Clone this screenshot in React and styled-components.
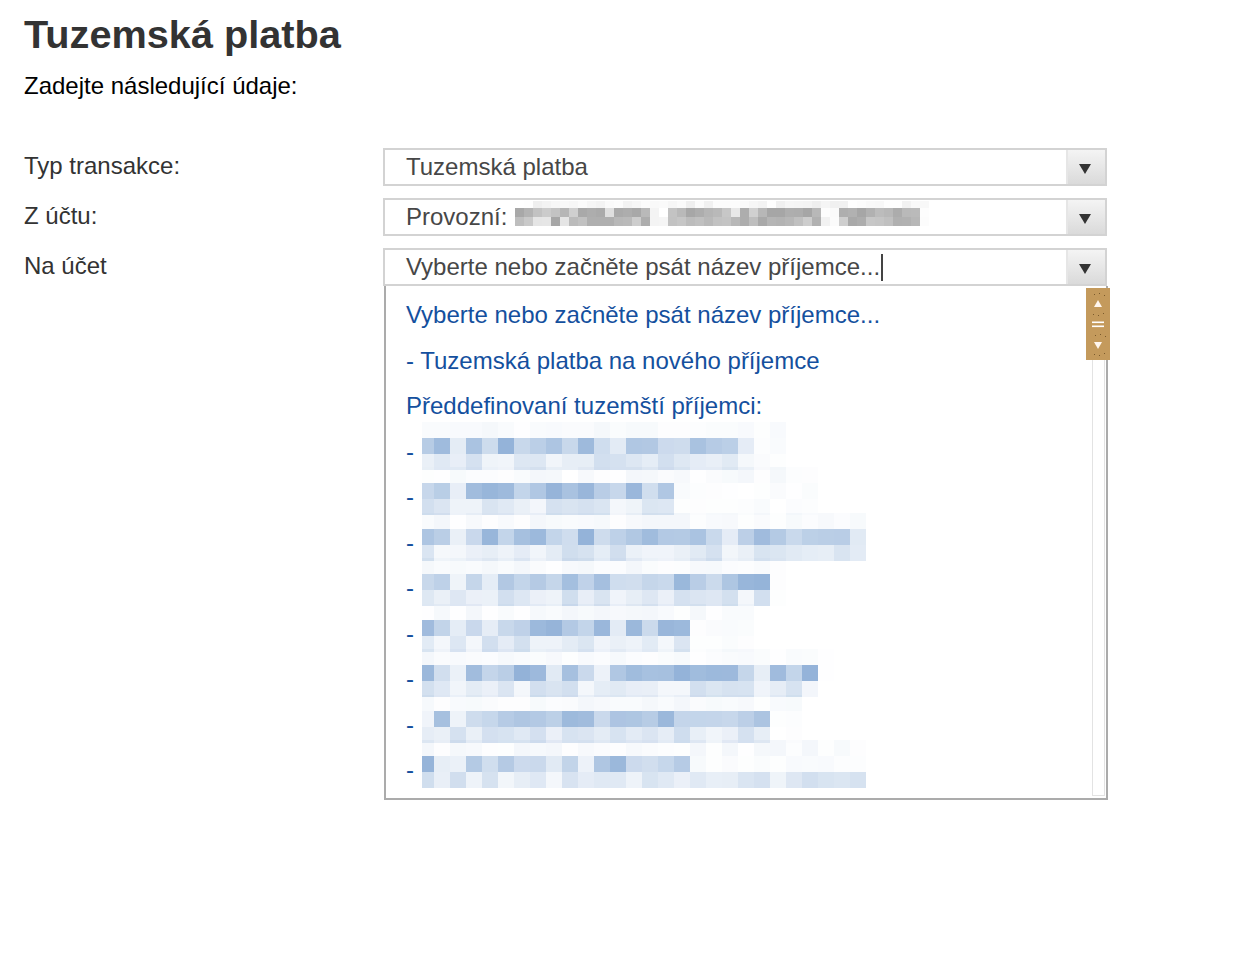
import React from 'react';
import styled, { createGlobalStyle } from 'styled-components';

const GlobalStyle = createGlobalStyle`
  html, body { margin: 0; padding: 0; background: #fff; }
  body { font-family: "Liberation Sans", Arial, Helvetica, sans-serif; }
`;

const Page = styled.div`
  box-sizing: border-box;
  width: 1238px;
  min-height: 956px;
  padding: 10px 0 0 24px;
`;

const Title = styled.h1`
  margin: 0;
  font-size: 39.7px;
  line-height: 48px;
  font-weight: 700;
  color: #333;
`;

const Subtitle = styled.p`
  margin: 14px 0 0;
  font-size: 24px;
  line-height: 28px;
  color: #000;
`;

const Form = styled.div`
  margin-top: 48px;
  display: flex;
  flex-direction: column;
  gap: 12px;
`;

const Row = styled.div`
  display: flex;
  align-items: flex-start;
`;

const Label = styled.div`
  width: 359px;
  font-size: 24px;
  line-height: 36px;
  color: #333;
`;

const SelectWrap = styled.div`
  position: relative;
  width: 724px;
`;

const SelectBox = styled.div`
  box-sizing: border-box;
  display: flex;
  height: 38px;
  border: 2px solid #d3d3d3;
  background: #fff;
`;

const SelectValue = styled.div`
  flex: 1;
  display: flex;
  align-items: center;
  padding-left: 21px;
  font-size: 24px;
  line-height: 34px;
  color: #474747;
  white-space: nowrap;
  overflow: hidden;
`;

const ArrowButton = styled.div`
  width: 39px;
  border-left: 2px solid #e6e6e6;
  background: linear-gradient(#f4f4f4, #dadada);
  display: flex;
  align-items: center;
  justify-content: center;
  padding: 4px 3px 0 0;
  box-sizing: border-box;
`;

const Caret = styled.span`
  display: inline-block;
  width: 2px;
  height: 27px;
  margin-left: 1px;
  background: #444;
`;

const GrayBlur = styled.span`
  display: flex;
  flex-direction: column;
  margin-top: -7px;
  margin-left: 1px;
`;

const BlurRow = styled.span`
  display: flex;
`;

const Block = styled.span`
  display: block;
  width: ${(p) => p.$w}px;
  height: ${(p) => p.$h}px;
`;

const DropList = styled.div`
  position: absolute;
  top: 100%;
  left: 1px;
  right: -1px;
  height: 514px;
  box-sizing: border-box;
  border: 2px solid #ababab;
  border-top: none;
  background: #fff;
`;

const Viewport = styled.div`
  height: 100%;
  overflow: hidden;
  box-sizing: border-box;
  padding: 6px 0 0 20px;
`;

const Option = styled.div`
  display: flex;
  align-items: flex-start;
  height: 45.5px;
  font-size: 24px;
  line-height: 45.5px;
  color: #14509e;
  white-space: nowrap;
`;

const Dash = styled.span`
  width: 16px;
  flex: none;
`;

const ItemBlur = styled.span`
  display: flex;
  flex-direction: column;
  margin-top: -7px;
`;

const ScrollTrack = styled.div`
  position: absolute;
  top: 2px;
  bottom: 2px;
  right: 1px;
  width: 13px;
  box-sizing: border-box;
  border: 1.5px solid #e3e3e3;
  border-top: none;
`;

const ScrollThumb = styled.div`
  position: absolute;
  top: 2px;
  right: -4px;
  width: 24px;
  height: 72px;
  background: #c49a5c;
  display: flex;
`;

const rng = (seed) => {
  let s = seed >>> 0;
  return () => {
    s = (s + 0x6d2b79f5) >>> 0;
    let t = s;
    t = Math.imul(t ^ (t >>> 15), t | 1);
    t ^= t + Math.imul(t ^ (t >>> 7), t | 61);
    return ((t ^ (t >>> 14)) >>> 0) / 4294967296;
  };
};

const recipients = [
  { seed: 11, dark: 740, light: 740, faint: 772 },
  { seed: 23, dark: 659, light: 659, faint: 805 },
  { seed: 37, dark: 852, light: 852, faint: 852 },
  { seed: 41, dark: 756, light: 756, faint: 772 },
  { seed: 53, dark: 676, light: 676, faint: 752 },
  { seed: 67, dark: 804, light: 804, faint: 820 },
  { seed: 71, dark: 756, light: 756, faint: 800 },
  { seed: 89, dark: 676, light: 866, faint: 866 },
];

function buildItemRows(spec) {
  const r = rng(spec.seed);
  const maxEnd = Math.max(spec.dark, spec.light, spec.faint);
  const widths = [12];
  let x = 434;
  while (x < maxEnd) {
    widths.push(16);
    x += 16;
  }
  return ['faint', 'dark', 'light'].map((kind) => {
    let pos = 422;
    return widths.map((w, i) => {
      const start = pos;
      pos += w;
      let a = 0;
      if (kind === 'dark') {
        if (start < spec.dark) a = i === 2 || r() < 0.1 ? 0.08 + r() * 0.08 : 0.24 + r() * 0.32;
        else if (start < spec.faint) a = r() * 0.04;
      } else if (kind === 'light') {
        if (start < spec.light) a = 0.05 + r() * 0.2;
        else if (start < spec.faint) a = r() * 0.03;
      } else {
        if (start < spec.faint) a = r() * 0.06;
      }
      return { w, color: `rgba(62,118,186,${a.toFixed(3)})` };
    });
  });
}

function buildGrayRows() {
  const r = rng(7);
  const n = 46;
  const gaps = [15, 16, 34, 35];
  return [7, 9, 9].map((h, ri) => ({
    h,
    cells: Array.from({ length: n }, (_, i) => {
      let a;
      if (ri === 0) a = r() * 0.1;
      else if (gaps.includes(i)) a = r() * 0.08;
      else if (i >= 45) a = r() * 0.06;
      else a = r() < 0.12 ? 0.14 + r() * 0.1 : 0.28 + r() * 0.26;
      return `rgba(90,90,90,${a.toFixed(3)})`;
    }),
  }));
}

const ArrowIcon = () => (
  <svg width="12" height="10" viewBox="0 0 12 10">
    <polygon points="0,0 12,0 6,10" fill="#333" />
  </svg>
);

const ThumbArt = () => {
  const dots = [
    [8, 6], [13, 5], [18, 7], [7, 26], [12, 27], [17, 25],
    [9, 47], [14, 46], [19, 48], [8, 66], [13, 67], [18, 65],
  ];
  return (
    <svg width="24" height="72" viewBox="0 0 24 72">
      {dots.map(([x, y], i) => (
        <rect key={i} x={x} y={y} width="1" height="1" fill="#7a5a2c" />
      ))}
      <polygon points="12,12 16,19 8,19" fill="#fff6ee" />
      <rect x="6" y="33.5" width="12" height="1.6" fill="#fff" />
      <rect x="6" y="37.5" width="12" height="1.6" fill="#fff" />
      <polygon points="8,54 16,54 12,61" fill="#fff6ee" />
    </svg>
  );
};

const Select = ({ children, open }) => (
  <SelectWrap>
    <SelectBox>
      <SelectValue>{children}</SelectValue>
      <ArrowButton>
        <ArrowIcon />
      </ArrowButton>
    </SelectBox>
    {open}
  </SelectWrap>
);

export default function App() {
  const grayRows = buildGrayRows();
  return (
    <Page>
      <GlobalStyle />
      <Title>Tuzemská platba</Title>
      <Subtitle>Zadejte následující údaje:</Subtitle>
      <Form>
        <Row>
          <Label>Typ transakce:</Label>
          <Select>Tuzemská platba</Select>
        </Row>
        <Row>
          <Label>Z účtu:</Label>
          <Select>
            Provozní:&nbsp;
            <GrayBlur>
              {grayRows.map((row, ri) => (
                <BlurRow key={ri}>
                  {row.cells.map((c, ci) => (
                    <Block key={ci} $w={9} $h={row.h} style={{ background: c }} />
                  ))}
                </BlurRow>
              ))}
            </GrayBlur>
          </Select>
        </Row>
        <Row>
          <Label>Na účet</Label>
          <Select
            open={
              <DropList>
                <Viewport>
                  <Option>Vyberte nebo začněte psát název příjemce...</Option>
                  <Option>- Tuzemská platba na nového příjemce</Option>
                  <Option>Předdefinovaní tuzemští příjemci:</Option>
                  {recipients.map((spec) => (
                    <Option key={spec.seed}>
                      <Dash>-</Dash>
                      <ItemBlur>
                        {buildItemRows(spec).map((row, ri) => (
                          <BlurRow key={ri}>
                            {row.map((b, bi) => (
                              <Block key={bi} $w={b.w} $h={16} style={{ background: b.color }} />
                            ))}
                          </BlurRow>
                        ))}
                      </ItemBlur>
                    </Option>
                  ))}
                </Viewport>
                <ScrollTrack />
                <ScrollThumb>
                  <ThumbArt />
                </ScrollThumb>
              </DropList>
            }
          >
            Vyberte nebo začněte psát název příjemce...
            <Caret />
          </Select>
        </Row>
      </Form>
    </Page>
  );
}
